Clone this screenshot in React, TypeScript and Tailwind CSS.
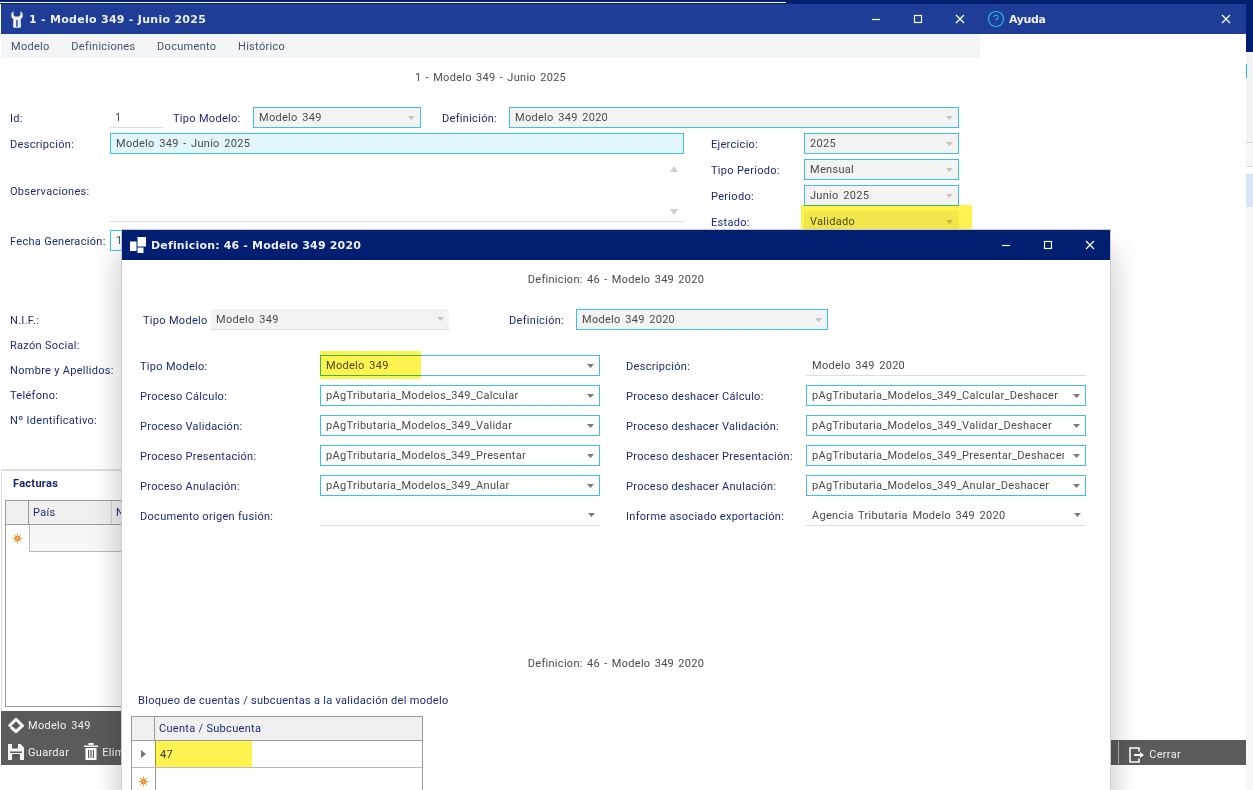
import type { ReactNode } from 'react';
import { CircleHelp } from 'lucide-react';

const LABEL = 'pt-[2px] text-[#1b2a7c] whitespace-nowrap';
const ROW_LABEL = 'pt-[4px] text-[#1b2a7c] whitespace-nowrap';
const HEADING = 'pt-[2px] text-[#4a4a4a] [word-spacing:1.2px]';

// window buttons
const WinButtons = ({ full = true }: { full?: boolean }) => (
  <div className="flex items-center text-white">
    {full && (
      <>
        <svg width="42" height="12" viewBox="0 0 42 12" fill="none" stroke="currentColor" strokeWidth="1.2">
          <path d="M18 6.500h8" />
        </svg>
        <svg width="42" height="12" viewBox="0 0 42 12" fill="none" stroke="currentColor" strokeWidth="1.2">
          <rect x="18.500" y="2.500" width="7" height="7" />
        </svg>
      </>
    )}
    <svg width="42" height="12" viewBox="0 0 42 12" fill="none" stroke="currentColor" strokeWidth="1.3">
      <path d="M18 2l8 8M26 2l-8 8" />
    </svg>
  </div>
);

const Arrow = ({ dim }: { dim?: boolean }) => (
  <svg width="7" height="4" viewBox="0 0 7 4" className="shrink-0">
    <path d="M0 0h7L3.500 4z" fill={dim ? '#c4c4c4' : '#7a7a7a'} />
  </svg>
);

type FieldProps = {
  value?: string;
  kind?: 'select' | 'disabled' | 'line' | 'flat';
  arrow?: boolean;
  className?: string;
};

const Field = ({ value = '', kind = 'select', arrow = true, className = '' }: FieldProps) => {
  let look = 'border border-[#3fbdf0] bg-white pl-[5px]';
  if (kind === 'disabled') look = 'border border-[#3fbdf0] bg-[#f3f3f3] pl-[5px]';
  if (kind === 'flat') look = 'border-b border-[#dddddd] bg-[#f3f3f3] pl-[5px]';
  if (kind === 'line') look = 'border-b border-[#dddddd] bg-white pl-[6px]';
  return (
    <div className={`flex h-[21px] shrink-0 items-center text-[#4a4a4a] ${look} ${className}`}>
      <span className="flex-1 overflow-hidden whitespace-nowrap pt-[2px] [word-spacing:1.5px]">{value}</span>
      {arrow && (
        <span className="flex w-[21px] shrink-0 justify-end pr-[5px]">
          <Arrow dim={kind === 'disabled' || kind === 'flat'} />
        </span>
      )}
    </div>
  );
};

const Highlight = ({ className }: { className: string }) => (
  <div className={`pointer-events-none absolute bg-[#fff44f] mix-blend-multiply ${className}`} />
);

const NewRowStar = () => (
  <svg width="11" height="11" viewBox="0 0 11 11" stroke="#f3a04a" strokeWidth="1">
    <circle cx="5.500" cy="5.500" r="2.800" fill="#f08a24" stroke="none" />
    <path d="M5.500 0.500v10M0.500 5.500h10M2 2l7 7M9 2l-7 7" />
  </svg>
);

const FooterItem = ({ icon, label }: { icon: ReactNode; label: string }) => (
  <div className="flex items-center gap-[4px] whitespace-nowrap">
    {icon}
    <span className="pt-[2px] [word-spacing:1.5px]">{label}</span>
  </div>
);

const ModelIcon = () => (
  <svg width="16" height="17" viewBox="0 0 16 17" fill="none" stroke="#fff" strokeWidth="3" strokeLinejoin="round" strokeLinecap="round">
    <path d="M1.800 8.500L8 2.300l6.200 6.200" />
    <path d="M14.200 8.800L8 14.700 3.800 10.800" />
  </svg>
);

const SaveIcon = () => (
  <svg width="16" height="16" viewBox="0 0 16 16">
    <path d="M0 0h12.500L16 3.500V16H0z" fill="#f4f4f4" />
    <path d="M4 0h6v4.500H4zM2 7.500h12V9H2zM4 10h8v6H4z" fill="#5b5b5b" />
  </svg>
);

const TrashIcon = () => (
  <svg width="14" height="17" viewBox="0 0 14 17" fill="#fff">
    <path d="M0 2.500h14V4H0zM4.500 0h5v2h-5zM1.500 5h11v12h-11z" />
    <path d="M4 7h1.200v8H4zM6.400 7h1.200v8H6.400zM8.800 7H10v8H8.800z" fill="#5b5b5b" />
  </svg>
);

const ExitIcon = () => (
  <svg width="16" height="16" viewBox="0 0 16 16" fill="none" stroke="#fff" strokeWidth="1.600">
    <path d="M10 4.500V1H1v14h9v-3.500" />
    <path d="M5 8h7" strokeWidth="2" />
    <path d="M11 5l4 3-4 3z" fill="#fff" stroke="none" />
  </svg>
);

const WrenchIcon = () => (
  <svg width="12" height="17" viewBox="0 0 12 17">
    <path
      d="M2.500 0.300C1 1.100 0.200 2.700 0.200 4.400c0 1.700 .8 3 2.100 3.800L2.100 15.200c0 1 .7 1.600 1.600 1.600h4.600c.9 0 1.600-.6 1.600-1.600L9.700 8.200c1.300-.8 2.100-2.100 2.100-3.800 0-1.700-.8-3.300-2.300-4.100v3.500L8 5.600H4L2.500 3.800z"
      fill="#eef0f8"
    />
    <path d="M5.300 9h1.400v6.800H5.300z" fill="#1e3d96" />
  </svg>
);

const BlocksIcon = () => (
  <svg width="16" height="16" viewBox="0 0 16 16" fill="#fff">
    <path d="M0 4.500h6.500V14H0zM7.500 0H16v9.500H7.500zM7.500 10.500h6V16h-6z" />
  </svg>
);

const MainWindow = () => (
  <div className="absolute left-[1px] top-[4px] flex h-[761px] w-[979px] flex-col bg-white">
    <div className="flex h-[30px] shrink-0 items-center justify-between bg-[#1e3d96] pl-[10px]">
      <div className="flex items-center gap-[6px] font-['DejaVu_Sans'] text-[11px] font-bold tracking-[0.28px] text-[#eef0f8]">
        <WrenchIcon />
        <span className="pt-[2px]">1 - Modelo 349 - Junio 2025</span>
      </div>
      <WinButtons />
    </div>
    <div className="flex h-[24px] shrink-0 items-center gap-[21.6px] bg-[#f4f5f7] pl-[10px] text-[#44506e]">
      <span className="pt-[2px]">Modelo</span>
      <span className="pt-[2px]">Definiciones</span>
      <span className="pt-[2px]">Documento</span>
      <span className="pt-[2px]">Histórico</span>
    </div>

    <div className={`flex h-[38px] shrink-0 items-center justify-center ${HEADING}`}>1 - Modelo 349 - Junio 2025</div>

    <div className="mt-[11px] flex h-[21px] shrink-0 items-center pl-[9px]">
      <span className={`w-[100px] ${ROW_LABEL}`}>Id:</span>
      <Field value="1" kind="line" arrow={false} className="w-[53px] !pl-[5px]" />
      <span className={`ml-[10px] w-[80px] ${ROW_LABEL}`}>Tipo Modelo:</span>
      <Field value="Modelo 349" kind="disabled" className="w-[168px]" />
      <span className={`ml-[21px] w-[67px] ${ROW_LABEL}`}>Definición:</span>
      <Field value="Modelo 349 2020" kind="disabled" className="w-[450px]" />
    </div>

    <div className="mt-[5px] flex shrink-0 pl-[9px]">
      <div className="w-[674px]">
        <div className="flex items-center">
          <span className={`w-[100px] ${ROW_LABEL}`}>Descripción:</span>
          <Field value="Modelo 349 - Junio 2025" arrow={false} className="w-[574px] !bg-[#e2f6fd]" />
        </div>
        <div className="mt-[6px] flex h-[62px] items-center">
          <span className={`w-[100px] ${LABEL}`}>Observaciones:</span>
          <div className="flex h-full w-[574px] flex-col items-end justify-between border-b border-[#dddddd] py-[6px] pr-[6px]">
            <svg width="8" height="6" viewBox="0 0 8 6"><path d="M0 6h8L4 0z" fill="#cfcfcf" /></svg>
            <svg width="8" height="6" viewBox="0 0 8 6"><path d="M0 0h8L4 6z" fill="#cfcfcf" /></svg>
          </div>
        </div>
        <div className="mt-[8px] flex items-center">
          <span className={`w-[100px] ${ROW_LABEL}`}>Fecha Generación:</span>
          <Field value="1" arrow={false} className="w-[120px]" />
        </div>
      </div>
      <div className="ml-[27px] flex w-[248px] flex-col gap-[5px]">
        {[
          ['Ejercicio:', '2025'],
          ['Tipo Periodo:', 'Mensual'],
          ['Periodo:', 'Junio 2025'],
        ].map(([label, value]) => (
          <div key={label} className="flex items-center">
            <span className={`w-[93px] ${ROW_LABEL}`}>{label}</span>
            <Field value={value} kind="disabled" className="w-[155px]" />
          </div>
        ))}
        <div className="relative flex items-center">
          <span className={`w-[93px] ${ROW_LABEL}`}>Estado:</span>
          <Field value="Validado" kind="disabled" className="w-[155px] !border-transparent" />
          <Highlight className="-top-[6px] left-[90px] h-[27px] w-[171px]" />
        </div>
      </div>
    </div>

    <div className="mt-[57px] flex shrink-0 flex-col pl-[9px]">
      {['N.I.F.:', 'Razón Social:', 'Nombre y Apellidos:', 'Teléfono:', 'Nº Identificativo:'].map((label) => (
        <div key={label} className={`flex h-[25px] items-center ${LABEL}`}>{label}</div>
      ))}
    </div>

    <div className="mt-[36px] flex min-h-0 flex-1 flex-col border-l border-t-2 border-[#dddddd] bg-white pl-[3px] pt-[5px]">
      <div className="h-[24px] pl-[8px] font-bold text-[#14246e]">Facturas</div>
      <div className="flex min-h-0 flex-1 flex-col border border-r-0 border-[#9a9a9a]">
        <div className="flex h-[24px] shrink-0 border-b border-[#9a9a9a] bg-[#f0f0f0]">
          <div className="w-[23px] border-r border-[#9a9a9a]" />
          <div className={`flex w-[83px] items-center border-r border-[#cccccc] pl-[4px] ${LABEL}`}>País</div>
          <div className={`flex items-center pl-[4px] ${LABEL}`}>N</div>
        </div>
        <div className="flex h-[27px] shrink-0">
          <div className="flex w-[23px] items-center justify-center"><NewRowStar /></div>
          <div className="flex-1 border-b border-l border-[#bbbbbb] bg-[#f7f7f7]" />
        </div>
      </div>
      <div className="h-[4px] shrink-0" />
    </div>

    <div className="flex h-[54px] shrink-0 flex-col justify-between bg-[#5b5b5b] pb-[4px] pl-[7px] pt-[5px] text-[#f2f2f2]">
      <FooterItem icon={<ModelIcon />} label="Modelo 349" />
      <div className="flex gap-[15px]">
        <FooterItem icon={<SaveIcon />} label="Guardar" />
        <FooterItem icon={<TrashIcon />} label="Eliminar" />
      </div>
    </div>
  </div>
);

const HelpWindow = () => (
  <div className="absolute left-[980px] top-[4px] flex h-[761px] w-[266px] flex-col bg-white">
    <div className="flex h-[30px] shrink-0 items-center justify-between bg-[#1e3d96]">
      <div className="flex items-center gap-[4px] pl-[7px] font-['DejaVu_Sans'] text-[11px] font-bold tracking-[-0.4px] text-[#eef0f8]">
        <CircleHelp size={18} strokeWidth={1.5} className="text-[#26b7f0]" />
        <span className="pt-[2px]">Ayuda</span>
      </div>
      <WinButtons full={false} />
    </div>
    <div className="flex-1" />
    <div className="flex h-[25px] shrink-0 items-center justify-end bg-[#5b5b5b] pr-[65px] pt-[4px] text-[#f2f2f2]">
      <div className="-mt-[4px] mr-[10px] h-[23px] w-px bg-[#b5b5b5]" />
      <FooterItem icon={<ExitIcon />} label="Cerrar" />
    </div>
  </div>
);

const FORM_ROWS: [string, FieldProps, string, FieldProps][] = [
  ['Tipo Modelo:', { value: 'Modelo 349' }, 'Descripción:', { value: 'Modelo 349 2020', kind: 'line', arrow: false }],
  ['Proceso Cálculo:', { value: 'pAgTributaria_Modelos_349_Calcular' }, 'Proceso deshacer Cálculo:', { value: 'pAgTributaria_Modelos_349_Calcular_Deshacer' }],
  ['Proceso Validación:', { value: 'pAgTributaria_Modelos_349_Validar' }, 'Proceso deshacer Validación:', { value: 'pAgTributaria_Modelos_349_Validar_Deshacer' }],
  ['Proceso Presentación:', { value: 'pAgTributaria_Modelos_349_Presentar' }, 'Proceso deshacer Presentación:', { value: 'pAgTributaria_Modelos_349_Presentar_Deshacer' }],
  ['Proceso Anulación:', { value: 'pAgTributaria_Modelos_349_Anular' }, 'Proceso deshacer Anulación:', { value: 'pAgTributaria_Modelos_349_Anular_Deshacer' }],
  ['Documento origen fusión:', { kind: 'line' }, 'Informe asociado exportación:', { value: 'Agencia Tributaria Modelo 349 2020', kind: 'line' }],
];

const DefinitionDialog = () => (
  <div className="absolute left-[122px] top-[230px] flex h-[600px] w-[988px] flex-col bg-white shadow-[0_0_0_1px_#cccccc,0_20px_30px_rgba(0,0,0,0.25)]">
    <div className="flex h-[30px] shrink-0 items-center justify-between bg-[#001f70]">
      <div className="flex items-center gap-[5px] pl-[8px] font-['DejaVu_Sans'] text-[11px] font-bold tracking-[0.17px] text-[#eef0f8]">
        <BlocksIcon />
        <span className="pt-[2px]">Definicion: 46 - Modelo 349 2020</span>
      </div>
      <WinButtons />
    </div>
    <div className={`flex h-[38px] shrink-0 items-center justify-center ${HEADING}`}>Definicion: 46 - Modelo 349 2020</div>

    <div className="mt-[11px] flex h-[21px] shrink-0 items-center pl-[21px]">
      <span className={`w-[68px] ${ROW_LABEL}`}>Tipo Modelo</span>
      <Field value="Modelo 349" kind="flat" className="w-[238px]" />
      <span className={`ml-[60px] w-[67px] ${ROW_LABEL}`}>Definición:</span>
      <Field value="Modelo 349 2020" kind="disabled" className="w-[252px]" />
    </div>

    <div className="relative mt-[25px] flex shrink-0 flex-col gap-[9px] pl-[18px]">
      {FORM_ROWS.map(([leftLabel, left, rightLabel, right]) => (
        <div key={leftLabel} className="flex items-center">
          <span className={`w-[180px] ${ROW_LABEL}`}>{leftLabel}</span>
          <Field {...left} className="w-[280px]" />
          <span className={`ml-[26px] w-[180px] ${ROW_LABEL}`}>{rightLabel}</span>
          <Field {...right} className="w-[280px]" />
        </div>
      ))}
      <Highlight className="left-[198px] -top-[4px] h-[28px] w-[101px]" />
    </div>

    <div className={`mt-[118px] flex h-[38px] shrink-0 items-center justify-center ${HEADING}`}>Definicion: 46 - Modelo 349 2020</div>
    <div className={`mt-[10px] h-[16px] shrink-0 pl-[16px] leading-[14px] ${LABEL}`}>Bloqueo de cuentas / subcuentas a la validación del modelo</div>

    <div className="ml-[9px] mt-[8px] w-[292px] shrink-0 border border-[#9a9a9a]">
      <div className="flex h-[24px] border-b border-[#9a9a9a] bg-[#f0f0f0]">
        <div className="w-[23px] border-r border-[#9a9a9a]" />
        <div className={`flex items-center pl-[4px] ${LABEL}`}>Cuenta / Subcuenta</div>
      </div>
      <div className="flex h-[27px] border-b border-[#bbbbbb]">
        <div className="flex w-[23px] items-center justify-center">
          <svg width="5" height="8" viewBox="0 0 5 8"><path d="M0 0l5 4-5 4z" fill="#777777" /></svg>
        </div>
        <div className="relative flex flex-1 items-center border-l border-[#9a9a9a] pl-[4px] pt-[2px] text-[#333333]">
          47
          <Highlight className="-left-[1px] top-0 h-full w-[97px]" />
        </div>
      </div>
      <div className="flex h-[27px]">
        <div className="flex w-[23px] items-center justify-center"><NewRowStar /></div>
        <div className="flex-1 border-l border-[#9a9a9a]" />
      </div>
    </div>
  </div>
);

export default function App() {
  return (
    <div className="relative h-[790px] w-[1253px] overflow-hidden bg-white font-['Roboto',sans-serif] text-[11px] tracking-[0.3px]">
      {/* desktop behind the windows */}
      <div className="absolute inset-x-0 top-0 h-[4px] bg-[#001f70]">
        <div className="mt-[2px] h-[1px] w-[786px] bg-white" />
      </div>
      <div className="absolute right-0 top-0 flex h-full w-[7px] flex-col bg-white">
        <div className="h-[52px] shrink-0 bg-[#001f70]" />
        <div className="h-[91px] shrink-0 border-b border-[#d8d8d8] bg-[#f3f3f3]">
          <div className="mt-[12px] h-[14px] w-[1px] bg-[#26b7f0]" />
        </div>
        <div className="h-[24px] shrink-0 border-b border-[#d8d8d8] bg-[#f6f6f6]" />
        <div className="mt-[7px] h-[33px] shrink-0 bg-[#d9e5f5]" />
        <div className="flex-1 bg-[#f8f8f8]" />
      </div>

      <MainWindow />
      <HelpWindow />
      <DefinitionDialog />
    </div>
  );
}
